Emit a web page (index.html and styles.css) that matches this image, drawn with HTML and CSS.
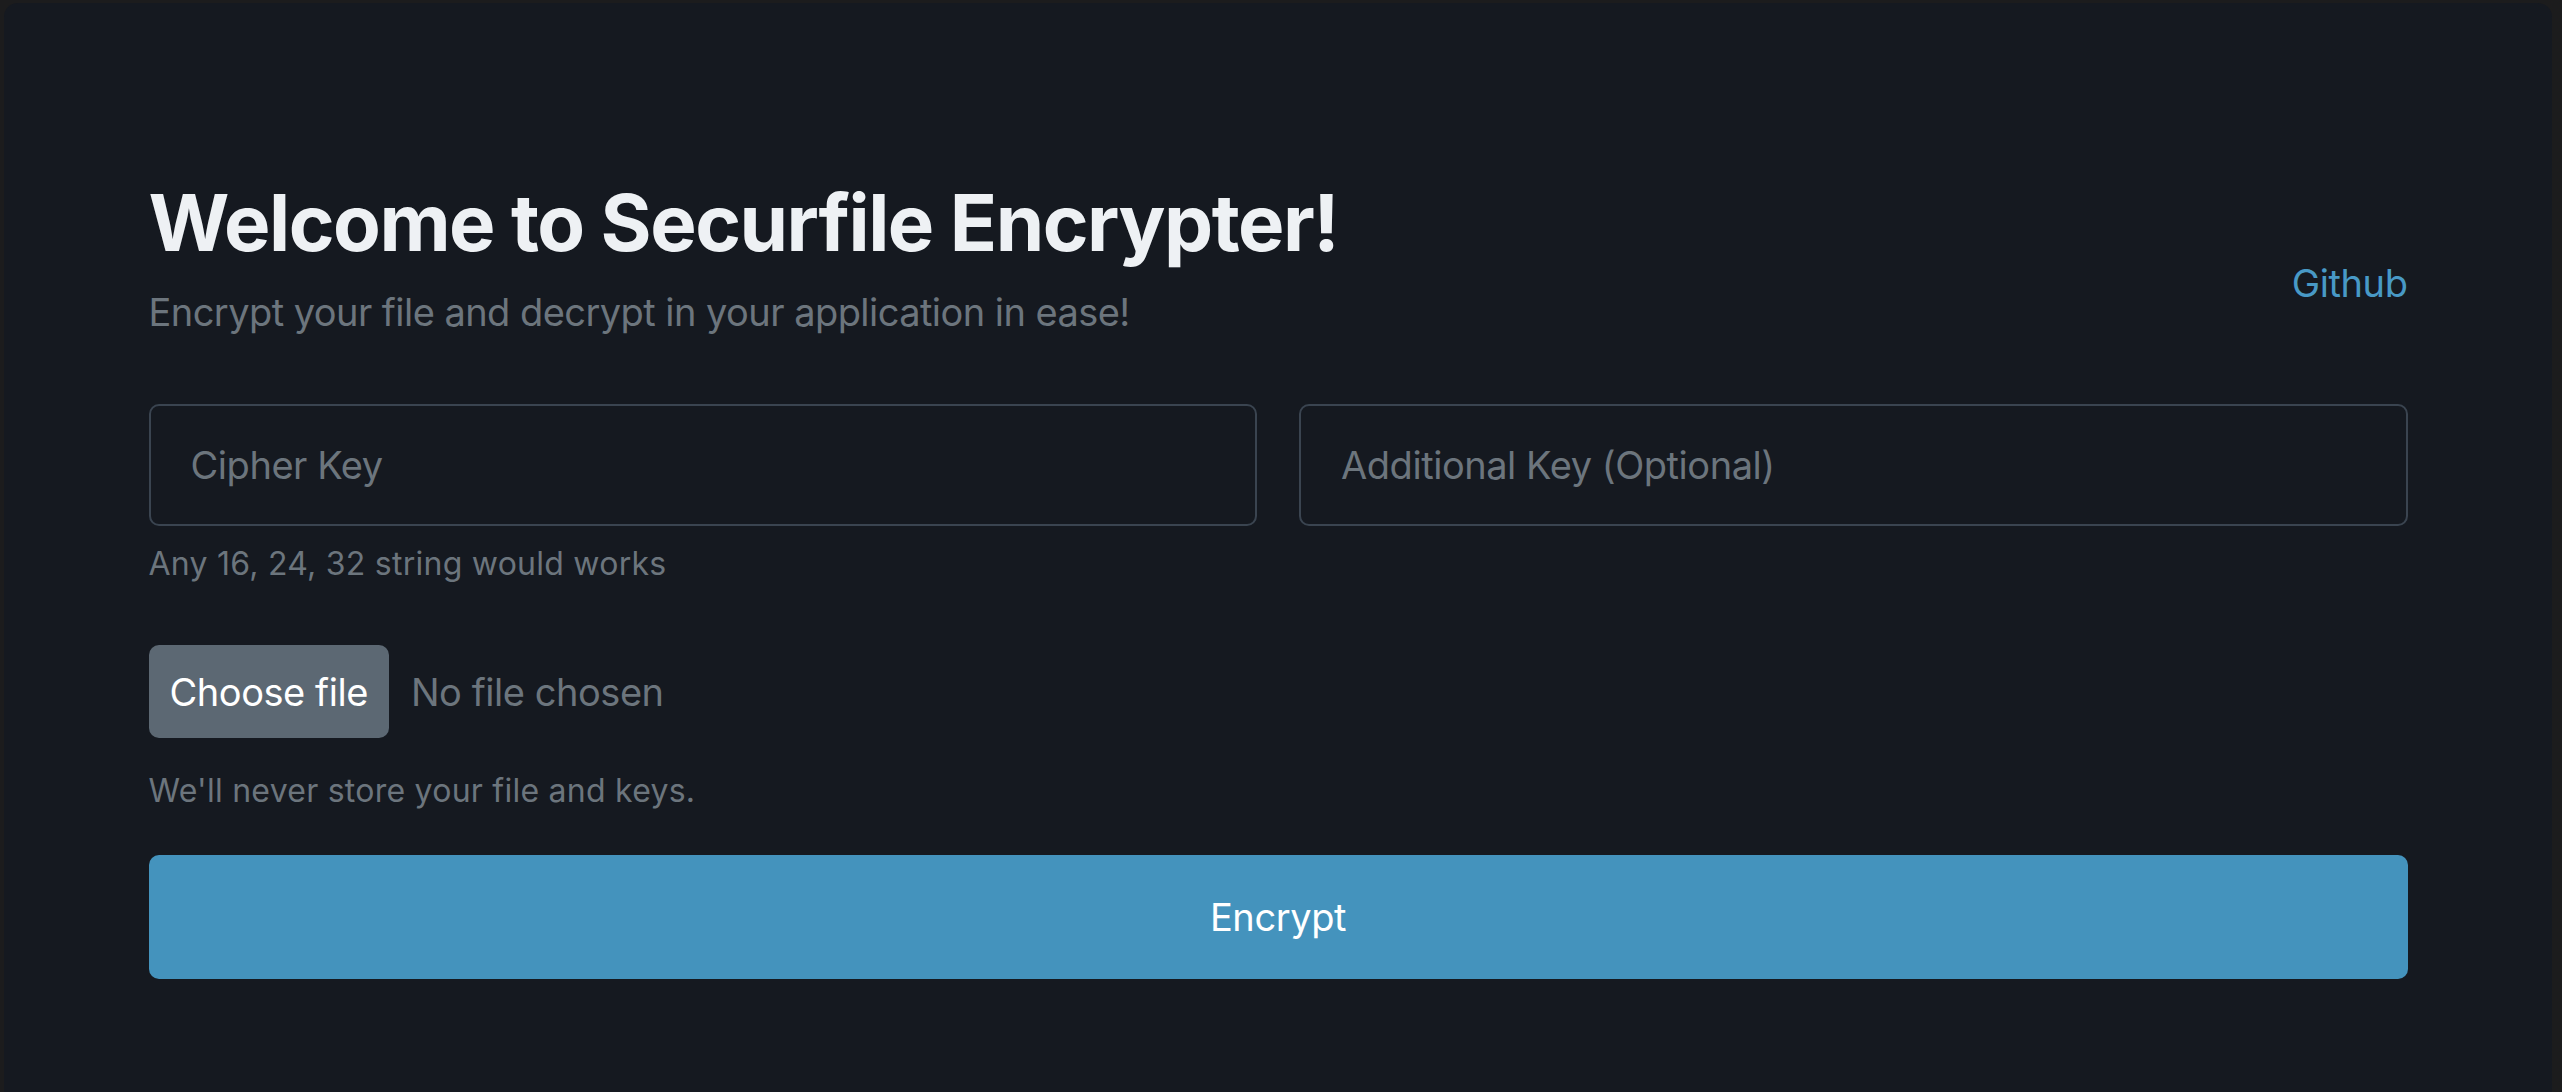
FILE: index.html
```
<!DOCTYPE html>
<html lang="en">
<head>
<meta charset="utf-8">
<title>Securfile Encrypter</title>
<link rel="stylesheet" href="styles.css">
</head>
<body>
<div class="window">
  <main class="container">
    <header class="header">
      <div class="intro">
        <h1 class="title">Welcome to Securfile Encrypter!</h1>
        <p class="lead">Encrypt your file and decrypt in your application in ease!</p>
      </div>
      <a class="github" href="#">Github</a>
    </header>
    <form class="form">
      <div class="keys">
        <div class="field">
          <input class="input" type="text" placeholder="Cipher Key">
          <div class="help">Any 16, 24, 32 string would works</div>
        </div>
        <div class="field">
          <input class="input" type="text" placeholder="Additional Key (Optional)">
        </div>
      </div>
      <div class="file-row">
        <button type="button" class="file-btn">Choose file</button>
        <span class="file-name">No file chosen</span>
      </div>
      <div class="help help-file">We'll never store your file and keys.</div>
      <button type="button" class="submit">Encrypt</button>
    </form>
  </main>
</div>
</body>
</html>
```
FILE: styles.css
```
* { box-sizing: border-box; }
html, body {
  margin: 0;
  padding: 0;
  height: 100%;
}
body {
  background: #1c1c1d;
  font-family: Inter, "Noto Sans", sans-serif;
  overflow: hidden;
}
.window {
  margin: 3px 10px 0 4px;
  height: calc(100vh - 3px);
  background: #151920;
  border-radius: 14px 14px 0 0;
}
.container {
  width: 2259px;
  margin: 0 auto;
  padding-top: 172px;
}
.header {
  display: flex;
  justify-content: space-between;
  align-items: flex-start;
}
.title {
  margin: 0;
  font-size: 78px;
  line-height: 96px;
  font-weight: 700;
  color: #eef1f4;
  letter-spacing: -1.5px;
}
.lead {
  margin: 11px 0 0;
  font-size: 38px;
  line-height: 60px;
  letter-spacing: -0.55px;
  color: #6c757d;
}
.github {
  margin-top: 78px;
  font-size: 38px;
  line-height: 60px;
  letter-spacing: -0.4px;
  color: #4899c6;
  text-decoration: none;
}
.form {
  margin-top: 62px;
}
.keys {
  display: grid;
  grid-template-columns: 1fr 1fr;
  gap: 42px;
}
.input {
  display: block;
  width: 100%;
  height: 122px;
  padding: 0 40px;
  background: #151920;
  border: 2px solid #3a4450;
  border-radius: 10px;
  font-family: inherit;
  font-size: 38px;
  letter-spacing: -0.45px;
  color: #dee2e6;
  outline: none;
}
.input::placeholder {
  color: #6c757d;
}
.help {
  margin-top: 14px;
  font-size: 32px;
  line-height: 48px;
  letter-spacing: 0.25px;
  color: #6c757d;
}
.file-row {
  display: flex;
  align-items: center;
  gap: 22px;
  margin-top: 57px;
}
.file-btn {
  height: 93px;
  padding: 0 21px;
  border: none;
  border-radius: 10px;
  background: #5c6873;
  color: #ffffff;
  font-family: inherit;
  font-size: 38px;
  letter-spacing: -0.45px;
}
.file-name {
  font-size: 38px;
  letter-spacing: -0.45px;
  color: #6c757d;
}
.help-file {
  margin-top: 29px;
}
.submit {
  display: block;
  width: 100%;
  height: 124px;
  margin-top: 40px;
  border: none;
  border-radius: 10px;
  background: #4493bd;
  color: #ffffff;
  font-family: inherit;
  font-size: 38px;
  letter-spacing: -0.4px;
}
```
